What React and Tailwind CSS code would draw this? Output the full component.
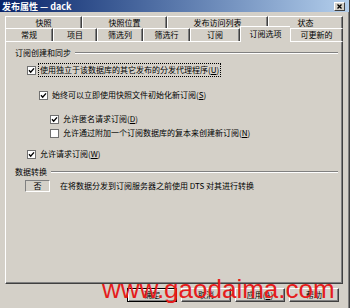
import React from "react";

const F = "font-['Noto_Sans_CJK_SC',sans-serif]";

function Check({ checked }) {
  return (
    <svg width="9" height="9" viewBox="0 0 9 9" className="shrink-0">
      <rect x="0.5" y="0.5" width="8" height="8" fill="#ffffff" stroke="#707070" />
      {checked && (
        <path d="M2 4.2 L3.7 6.2 L7 2.4" stroke="#000" strokeWidth="1.4" fill="none" />
      )}
    </svg>
  );
}

function Row({ indent, checked, children, focus, className }) {
  return (
    <div className={`flex items-center h-[10px] ${indent} ${className}`}>
      <Check checked={checked} />
      <span
        className={`ml-[2px] leading-[10px] whitespace-nowrap ${
          focus ? "border border-dotted border-black px-[1px] -my-[2px] py-[1px]" : "pl-[2px]"
        }`}
      >
        {children}
      </span>
    </div>
  );
}

function Group({ label, className }) {
  return (
    <div className={`flex items-center h-[10px] ${className}`}>
      <span className="leading-[10px] whitespace-nowrap">{label}</span>
      <div className="flex-1 ml-[4px] flex flex-col">
        <div className="h-px bg-[#808080]" />
        <div className="h-px bg-white" />
      </div>
    </div>
  );
}

function Tab({ w, label }) {
  return (
    <div
      className={`${w} h-full flex items-center justify-center border-t border-l border-t-white border-l-white border-r border-r-[#404040] shadow-[inset_-1px_0_0_#808080] text-[8px] leading-none`}
    >
      {label}
    </div>
  );
}

function Btn({ label, def }) {
  return (
    <div
      className={`w-[50px] h-[14px] flex items-center justify-center text-[8px] leading-none bg-[#d4d0c8] border ${
        def
          ? "border-black shadow-[inset_1px_1px_0_#ffffff,inset_-1px_-1px_0_#808080]"
          : "border-t-white border-l-white border-b-[#404040] border-r-[#404040] shadow-[inset_-1px_-1px_0_#808080]"
      }`}
    >
      {label}
    </div>
  );
}

export default function App() {
  return (
    <div
      className={`relative w-[350px] h-[308px] overflow-hidden bg-[#d4d0c8] text-black ${F} border-r border-r-[#404040] shadow-[inset_-1px_0_0_#808080]`}
    >
      {/* title bar */}
      <div className="h-[12px] flex items-center justify-between pl-[2px] pr-[4px] bg-linear-to-r from-[#0a246a] to-[#b4cfec]">
        <span className="text-[9px] font-bold text-white leading-none whitespace-nowrap">
          发布属性 — dack
        </span>
        <div className="w-[11px] h-[9px] bg-[#d4d0c8] border border-t-white border-l-white border-b-[#404040] border-r-[#404040] flex items-center justify-center">
          <svg width="5" height="5" viewBox="0 0 5 5">
            <path d="M0.5 0.5 L4.5 4.5 M4.5 0.5 L0.5 4.5" stroke="#000" strokeWidth="1.3" />
          </svg>
        </div>
      </div>

      {/* tabs */}
      <div className="mt-[4px] ml-[5px] w-[338px]">
        <div className="flex h-[12px]">
          <Tab w="w-[77px]" label="快照" />
          <Tab w="w-[85px]" label="快照位置" />
          <Tab w="w-[101px]" label="发布访问列表" />
          <Tab w="w-[75px]" label="状态" />
        </div>
        <div className="flex h-[13px] items-start">
          <Tab w="w-[48px]" label="常规" />
          <Tab w="w-[44px]" label="项目" />
          <Tab w="w-[46px]" label="筛选列" />
          <Tab w="w-[47px]" label="筛选行" />
          <Tab w="w-[50px]" label="订阅" />
          <div className="relative z-10 w-[50px] h-[16px] -mt-[2px] bg-[#d4d0c8] flex items-start pt-[3px] justify-center border-t border-l border-t-white border-l-white text-[8px] leading-none">
            订阅选项
          </div>
          <Tab w="w-[53px]" label="可更新的" />
        </div>

        {/* panel */}
        <div className="h-[243px] border border-t-white border-l-white border-b-[#404040] border-r-[#404040] shadow-[inset_-1px_-1px_0_#808080] text-[8px] pl-[9px] pr-[4px] pt-[6px]">
          <Group label="订阅创建和同步" />
          <Row indent="ml-[12px]" checked focus className="mt-[7px]">
            使用独立于该数据库的其它发布的分发代理程序(<u>U</u>)
          </Row>
          <Row indent="ml-[24px]" checked className="mt-[15px]">
            始终可以立即使用快照文件初始化新订阅(<u>S</u>)
          </Row>
          <Row indent="ml-[35px]" checked className="mt-[14px]">
            允许匿名请求订阅(<u>D</u>)
          </Row>
          <Row indent="ml-[35px]" className="mt-[4px]">
            允许通过附加一个订阅数据库的复本来创建新订阅(<u>N</u>)
          </Row>
          <Row indent="ml-[12px]" checked className="mt-[11px]">
            允许请求订阅(<u>W</u>)
          </Row>
          <Group label="数据转换" className="mt-[8px]" />
          <div className="flex items-center mt-[3px]">
            <div className="ml-[10px] w-[25px] h-[12px] flex items-center justify-center border border-t-[#808080] border-l-[#808080] border-b-white border-r-white leading-none">
              否
            </div>
            <span className="ml-[10px] leading-[10px] whitespace-nowrap">
              在将数据分发到订阅服务器之前使用 DTS 对其进行转换
            </span>
          </div>
        </div>
      </div>

      {/* buttons */}
      <div className="mt-[4px] flex justify-end gap-[4px] pr-[10px]">
        <Btn label="确定" def />
        <Btn label="取消" />
        <Btn label={<span>应用(<u>A</u>)</span>} />
        <Btn label="帮助" />
      </div>

      {/* watermark */}
      <div className="absolute left-[102px] top-[276px] text-[26px] leading-[26px] text-[#e51c1c] font-['Liberation_Sans',Arial,sans-serif] whitespace-nowrap pointer-events-none">
        www.gaodaima.com
      </div>
    </div>
  );
}
